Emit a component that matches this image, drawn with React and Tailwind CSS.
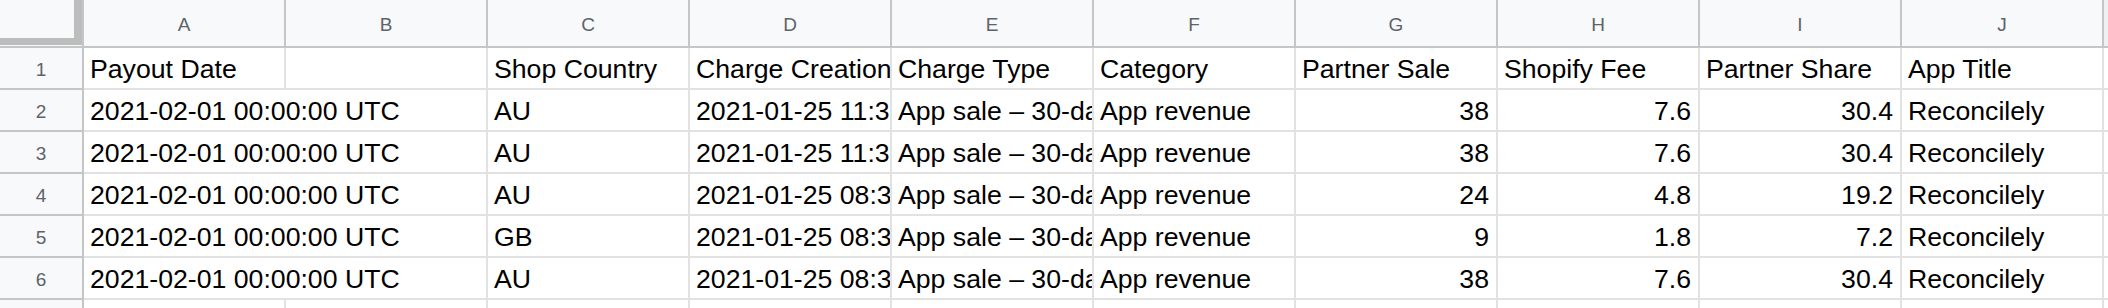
const columns = ['A', 'B', 'C', 'D', 'E', 'F', 'G', 'H', 'I', 'J'];

const rows = [
  { date: '2021-02-01 00:00:00 UTC', country: 'AU', created: '2021-01-25 11:38:14 UTC', sale: '38', fee: '7.6', share: '30.4' },
  { date: '2021-02-01 00:00:00 UTC', country: 'AU', created: '2021-01-25 11:36:52 UTC', sale: '38', fee: '7.6', share: '30.4' },
  { date: '2021-02-01 00:00:00 UTC', country: 'AU', created: '2021-01-25 08:35:27 UTC', sale: '24', fee: '4.8', share: '19.2' },
  { date: '2021-02-01 00:00:00 UTC', country: 'GB', created: '2021-01-25 08:33:09 UTC', sale: '9', fee: '1.8', share: '7.2' },
  { date: '2021-02-01 00:00:00 UTC', country: 'AU', created: '2021-01-25 08:31:40 UTC', sale: '38', fee: '7.6', share: '30.4' },
];

const cell =
  'flex h-full w-[202px] shrink-0 items-center overflow-hidden whitespace-nowrap border-r-2 border-b-2 border-[#e2e2e3] px-[6px] pt-[3px]';
const numCell = cell + ' justify-end pr-[7px]';
const rowHead =
  'flex h-full w-[84px] shrink-0 items-center justify-center border-r-2 border-b-2 border-[#c4c7c5] bg-[#f8f9fa] pt-[3px] text-[19px] text-[#5f6368]';

const Cell = ({ children, className = cell }) => (
  <div className={className}>
    <span>{children}</span>
  </div>
);

const App = () => {
  return (
    <div className="h-[308px] w-[2108px] overflow-hidden bg-white font-['Liberation_Sans',Arial,sans-serif] text-[26.67px] leading-[1.15] text-black">
      {/* Column letters */}
      <div className="flex h-[48px]">
        <div className="h-full w-[84px] shrink-0 border-r-2 border-b-2 border-[#c4c7c5] bg-[#f8f9fa]">
          <div className="h-[45px] w-full border-r-[8px] border-b-[7px] border-[#bdbdbd]" />
        </div>
        {columns.map((c) => (
          <div
            key={c}
            className="flex h-full w-[202px] shrink-0 items-center justify-center border-r-2 border-b-2 border-[#c4c7c5] bg-[#f8f9fa] pt-[3px] text-[19px] text-[#5f6368]"
          >
            {c}
          </div>
        ))}
        <div className="h-full flex-1 border-b-2 border-[#c4c7c5] bg-[#eef0f1]" />
      </div>

      {/* Header row */}
      <div className="flex h-[42px]">
        <div className={rowHead}>1</div>
        <Cell>Payout Date</Cell>
        <Cell></Cell>
        <Cell>Shop Country</Cell>
        <Cell>Charge Creation Date</Cell>
        <Cell>Charge Type</Cell>
        <Cell>Category</Cell>
        <Cell>Partner Sale</Cell>
        <Cell>Shopify Fee</Cell>
        <Cell>Partner Share</Cell>
        <Cell>App Title</Cell>
        <div className="h-full flex-1 border-b-2 border-[#e2e2e3]" />
      </div>

      {rows.map((r, i) => (
        <div key={i} className="flex h-[42px]">
          <div className={rowHead}>{i + 2}</div>
          <div className="flex h-full w-[404px] shrink-0 items-center overflow-hidden whitespace-nowrap border-r-2 border-b-2 border-[#e2e2e3] px-[6px] pt-[3px]">
            <span>{r.date}</span>
          </div>
          <Cell>{r.country}</Cell>
          <Cell>{r.created}</Cell>
          <Cell>App sale – 30-day fee</Cell>
          <Cell>App revenue</Cell>
          <Cell className={numCell}>{r.sale}</Cell>
          <Cell className={numCell}>{r.fee}</Cell>
          <Cell className={numCell}>{r.share}</Cell>
          <Cell>Reconcilely</Cell>
          <div className="h-full flex-1 border-b-2 border-[#e2e2e3]" />
        </div>
      ))}

      {/* Partial row 7 */}
      <div className="flex h-[42px]">
        <div className={rowHead}>7</div>
        {columns.map((c) => (
          <div key={c} className="h-full w-[202px] shrink-0 border-r-2 border-[#e2e2e3]" />
        ))}
      </div>
    </div>
  );
};

export default App;
